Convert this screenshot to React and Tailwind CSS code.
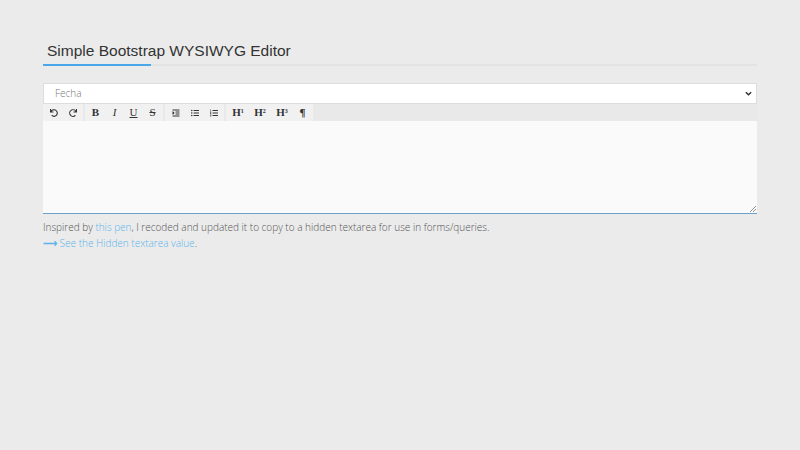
import React from "react";
import { FaUndo, FaRedo, FaIndent, FaListUl, FaListOl } from "react-icons/fa";

const Btn = ({ children, cls = "" }) => (
  <span className={"w-[19px] h-[16px] flex items-center justify-center text-[#333] " + cls}>{children}</span>
);
const serif = { fontFamily: '"Liberation Serif", serif' };

export default function App() {
  return (
    <div className="w-[800px] h-[450px] bg-[#ebebeb] pt-[40px] px-[43px]" style={{ fontFamily: '"Open Sans", sans-serif' }}>
      <div className="relative border-b-2 border-[#e3e3e3] pb-[2px]">
        <h1 className="text-[15.5px] leading-[22px] text-[#333] pl-[4px]" style={{ fontFamily: '"Liberation Sans", sans-serif' }}>Simple Bootstrap WYSIWYG Editor</h1>
        <div className="absolute left-0 bottom-[-2px] w-[108px] h-[2px] bg-[#4aa8e8]" />
      </div>
      <div className="mt-[17px] h-[21px] bg-white border border-[#ddd] flex items-center justify-between pl-[11px] pr-[3px]">
        <span className="text-[10px] font-light text-[#777]">Fecha</span>
        <svg width="9" height="9" viewBox="0 0 10 10"><path d="M2 3.5 L5 6.5 L8 3.5" fill="none" stroke="#333" strokeWidth="1.6" /></svg>
      </div>
      <div className="h-[17px] flex gap-[2px] bg-[#e9e9e9]">
        <div className="flex bg-[#f1f1f1] px-[1px] items-center">
          <Btn><FaUndo size={8} /></Btn><Btn><FaRedo size={8} /></Btn>
        </div>
        <div className="flex bg-[#f1f1f1] px-[1px] items-center text-[11px]" style={serif}>
          <Btn><b>B</b></Btn><Btn><i>I</i></Btn><Btn><u>U</u></Btn><Btn><s>S</s></Btn>
        </div>
        <div className="flex bg-[#f1f1f1] px-[1px] items-center">
          <Btn><FaIndent size={8} /></Btn><Btn><FaListUl size={8} /></Btn><Btn><FaListOl size={8} /></Btn>
        </div>
        <div className="flex bg-[#f1f1f1] px-[1px] items-center text-[11px]" style={serif}>
          <Btn cls="w-[22px]"><b>H<sup className="text-[6px]">1</sup></b></Btn>
          <Btn cls="w-[22px]"><b>H<sup className="text-[6px]">2</sup></b></Btn>
          <Btn cls="w-[22px]"><b>H<sup className="text-[6px]">3</sup></b></Btn>
          <Btn><b>¶</b></Btn>
        </div>
      </div>
      <div className="relative h-[93px] bg-[#fafafa] border-b border-[#6f9fc4]">
        <svg className="absolute right-[1px] bottom-[1px]" width="6" height="6" viewBox="0 0 6 6"><path d="M0 6 L6 0 M3 6 L6 3" stroke="#777" strokeWidth="0.8" /></svg>
      </div>
      <p className="mt-[5px] text-[10px] font-light leading-[16px] text-[#555]">
        Inspired by <span className="text-[#5bb5ea]">this pen</span>, I recoded and updated it to copy to a hidden textarea for use in forms/queries.
      </p>
      <p className="text-[10px] font-light leading-[16px] text-[#5bb5ea]"><span className="font-bold">⟶</span> See the Hidden textarea value<span className="text-[#555]">.</span></p>
    </div>
  );
}
